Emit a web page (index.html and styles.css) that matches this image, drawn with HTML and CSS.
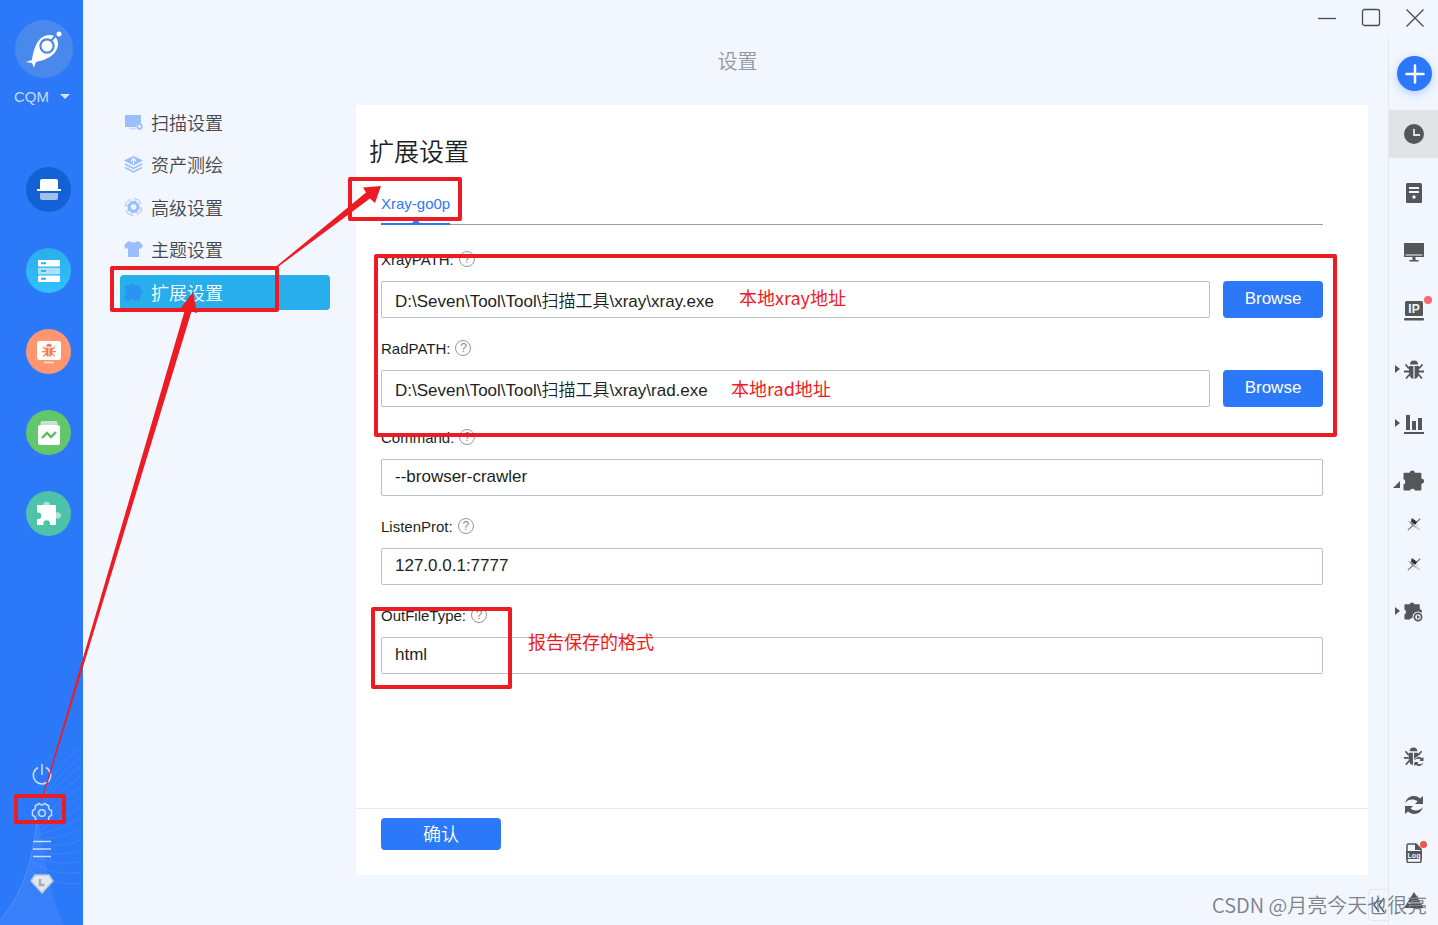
FILE: index.html
```html
<!DOCTYPE html>
<html lang="zh-CN">
<head>
<meta charset="utf-8">
<meta name="viewport" content="width=device-width, initial-scale=1">
<title>设置</title>
<link rel="stylesheet" href="styles.css">
</head>
<body>
<svg class="defs" aria-hidden="true">
  <symbol id="puzzle" viewBox="0 0 20 20"><path d="M1.500 2.500H6.300a2.700 2.700 0 0 1 5.200 0H16.500a1 1 0 0 1 1 1V8a2.500 2.500 0 0 1 0 5v5.500a1 1 0 0 1-1 1H11.300a2.300 1.700 0 0 0-4.600 0H1.500a1 1 0 0 1-1-1V13.500a1.700 2.400 0 0 0 0-4.800V3.500a1 1 0 0 1 1-1z"/></symbol>
  <symbol id="bug" viewBox="0 0 20 20"><path d="M6 4.500a4 4 0 0 1 8 0z"/><path d="M5 6h4.400v13C6.500 18.500 5 16 5 12zM10.600 6H15v6c0 4-1.500 6.500-4.400 7z"/><path d="M5 8.500L1.500 4.500M0 11.500H5M5.500 14.500L2 18.500M15 8.500L18.500 4.500M20 11.500H15M14.500 14.500L18 18.500" fill="none" stroke="currentColor" stroke-width="1.800"/></symbol>
  <symbol id="sync" viewBox="0 0 20 20"><path d="M1 8C3 1 11-1 16 3.500l3-2.500V9H11l2.500-2.500C10 3.500 4 4 1 8zM19 12c-2 7-10 9-15 4.500L1 19V11H9l-2.500 2.500C10 16.500 16 16 19 12z"/></symbol>
  <symbol id="pin" viewBox="0 0 16 16"><path d="M1 15L15 2" stroke="#777" stroke-width="1.500"/><path d="M5.500 1l6 4.500-2 4-5-4z" fill="#333"/><path d="M1 4l9 5 5 6-9-5z" fill="#888"/><path d="M7 8.500l6 6-.5-6z" fill="#ddd"/></symbol>
</svg>

<div class="app">
  <aside class="sidebar">
    <svg class="waves" viewBox="0 0 83 185" fill="none" aria-hidden="true">
      <path d="M0 180C22 156 35 118 37 72C44 118 51 158 64 185H0z" fill="#fff" fill-opacity=".06" stroke="none"/>
      <path d="M0 180C22 156 35 118 37 72" stroke-opacity=".15"/>
      <path d="M37 72C48 38 64 18 83 8M37 74C50 44 65 27 83 16M37 77C51 50 67 36 83 25M37 80C52 58 68 45 83 35M37 83C53 66 69 55 83 45M37 87C54 74 70 64 83 55M37 91C55 82 71 74 83 66M37 95C56 90 71 84 83 77M37 99C56 99 71 94 83 88M36 104C55 107 71 104 83 99M35 109C54 116 70 114 83 110M34 115C52 125 69 124 83 121M32 122C51 134 67 134 83 132M29 130C48 143 66 145 83 143"/>
    </svg>
    <button class="avatar" aria-label="头像">
      <svg width="38" height="38" viewBox="0 0 38 38"><path fill="#fff" d="M7 30C9 17 13 6 24 5c6-.5 9 4 9 9-.500 11-12 16-22 18l-2 5.500-2-4.500-6-1z"/><circle cx="22" cy="16" r="6.600" fill="none" stroke="#4a89ec" stroke-width="2.200"/><path d="M26 11l6-7" stroke="#4a89ec" stroke-width="2"/><circle cx="34" cy="4" r="2.500" fill="#fff"/></svg>
    </button>
    <button class="account">CQM <span class="caret"></span></button>
    <nav class="modules">
      <button class="module navy" aria-label="扫描"><svg width="26" height="24" viewBox="0 0 26 24"><path fill="#fff" d="M4 3a2 2 0 0 1 2-2h14a2 2 0 0 1 2 2v8h3v2H1v-2h3z"/><path fill="#fff" fill-opacity=".6" d="M4 15h18v5a2 2 0 0 1-2 2H6a2 2 0 0 1-2-2z"/></svg></button>
      <button class="module cyan" aria-label="资产"><svg width="22" height="22" viewBox="0 0 22 22"><g fill="#fff"><rect width="22" height="6.500" rx="1"/><rect y="7.700" width="22" height="6.500" rx="1" opacity=".6"/><rect y="15.400" width="22" height="6.500" rx="1"/></g><path d="M3 3.200h5M3 11h5M3 18.700h5" stroke="#2cb4ee" stroke-width="2"/></svg></button>
      <button class="module orange" aria-label="漏洞"><svg width="24" height="24" viewBox="0 0 24 24"><rect y="1" width="24" height="19" rx="2.500" fill="#fff"/><path d="M7 22.500h10" stroke="#fff" stroke-opacity=".7" stroke-width="1.500"/><use href="#bug" x="5" y="3" width="14" height="15"/></svg></button>
      <button class="module green" aria-label="报告"><svg width="22" height="24" viewBox="0 0 22 24"><rect x="2.500" width="17" height="8" rx="2" fill="#fff" opacity=".6"/><rect y="4" width="22" height="20" rx="2.500" fill="#fff"/><path d="M4 17l5-5 4 4 5-5" fill="none" stroke="#55bd62" stroke-width="2.400"/></svg></button>
      <button class="module teal" aria-label="扩展"><svg width="25" height="25" viewBox="0 0 25 25" fill="#fff"><circle cx="10.500" cy="4" r="3.300" opacity=".55"/><circle cx="21.500" cy="14.500" r="3.300" opacity=".55"/><path d="M2 4h17a1 1 0 0 1 1 1v18a1 1 0 0 1-1 1h-5v-1.500a3.300 3.300 0 0 0-6.600 0V24H2a1 1 0 0 1-1-1v-5h1a3.300 3.300 0 0 0 0-6.600H1V5a1 1 0 0 1 1-1z"/></svg></button>
    </nav>
    <div class="tools">
      <button aria-label="退出"><svg width="22" height="22" viewBox="0 0 22 22"><path d="M7 3.500a8.700 8.700 0 1 0 8 0M11 0v11"/></svg></button>
      <button aria-label="设置"><svg width="22" height="22" viewBox="0 0 22 22" stroke-linejoin="round"><circle cx="11" cy="11" r="3.300"/><path d="M20.500 8.500v5Q16.600 14.300 17.900 18L13.600 20.500Q11 17.500 8.400 20.500L4.100 18Q5.400 14.300 1.500 13.500v-5Q5.400 7.700 4.100 4L8.400 1.500Q11 4.500 13.600 1.500L17.900 4Q16.600 7.700 20.500 8.500z"/></svg></button>
      <button aria-label="菜单"><svg width="20" height="18" viewBox="0 0 20 18"><path d="M1 1.500h18M1 9h18M1 16.500h18"/></svg></button>
      <button aria-label="授权"><svg width="24" height="20" viewBox="0 0 24 20"><path d="M5 1h14l4 6-11 12L1 7z" fill="#e3e8ee" stroke="#b4c5da"/><path d="M10 5v6h4.500" stroke="#9aafb9" stroke-width="2.500"/></svg></button>
    </div>
  </aside>

  <div class="workspace">
    <header class="titlebar">
      <button aria-label="最小化"><svg width="20" height="20" viewBox="0 0 20 20"><path d="M1 10.500h18"/></svg></button>
      <button aria-label="最大化"><svg width="20" height="20" viewBox="0 0 20 20"><rect x="1.500" y="1.500" width="17" height="16" rx="2"/></svg></button>
      <button aria-label="关闭"><svg width="20" height="20" viewBox="0 0 20 20"><path d="M1.500 1.500l17 17M18.500 1.500l-17 17"/></svg></button>
    </header>
    <div class="body">
      <main class="main">
        <h1 class="title">设置</h1>
        <div class="content">
          <nav class="menu">
            <a href="#scan"><svg width="19" height="18" viewBox="0 0 19 18"><path d="M1 2h16v8.500a4 4 0 0 0-5 3.500H1z"/><path d="M5 15.500h7" stroke="#c6d9fc" stroke-width="1.500"/><circle cx="15.500" cy="13.500" r="2.300" fill="none" stroke="#9abffb" stroke-width="1.700"/></svg>扫描设置</a>
            <a href="#asset"><svg width="19" height="18" viewBox="0 0 19 18"><path d="M9.500 1L19 5.500 9.500 10.500 0 5.500z"/><path d="M1 9l8.500 4.500L18 9M1 12.500L9.500 17l8.500-4.500" fill="none" stroke="#9abffb" stroke-width="1.500"/><path d="M9.500 9V4M7 6l2.500-2.500L12 6" fill="none" stroke="#f1f6ff" stroke-width="1.300"/></svg>资产测绘</a>
            <a href="#advanced"><svg width="19" height="18" viewBox="0 0 19 18"><circle cx="9.500" cy="9" r="8.300" fill="none" stroke="#9abffb" stroke-dasharray="9.500 3.540"/><circle cx="9.500" cy="9" r="4.300" fill="none" stroke="#9abffb" stroke-width="3"/><circle cx="9.500" cy="9" r="5.900" fill="none" stroke="#9abffb" stroke-width="1.200" stroke-dasharray="2.600 2"/></svg>高级设置</a>
            <a href="#theme"><svg width="19" height="18" viewBox="0 0 19 18"><path d="M6 1c1 2 6 2 7 0l3 1 3 4-2 3-2-1v9H4V8L2 9 0 6l3-4z"/></svg>主题设置</a>
            <a href="#extension" class="active"><svg width="19" height="18"><use href="#puzzle"/></svg>扩展设置</a>
          </nav>
          <form class="panel">
            <div class="panel-body">
              <h2>扩展设置</h2>
              <div class="tabs"><button type="button" class="tab">Xray-go0p</button></div>
              <div class="field">
                <div class="label"><label for="xray">XrayPATH:</label><span class="help">?</span></div>
                <div class="row"><input id="xray" type="text" value="D:\Seven\Tool\Tool\扫描工具\xray\xray.exe"><button type="button" class="primary browse">Browse</button></div>
              </div>
              <div class="field">
                <div class="label"><label for="rad">RadPATH:</label><span class="help">?</span></div>
                <div class="row"><input id="rad" type="text" value="D:\Seven\Tool\Tool\扫描工具\xray\rad.exe"><button type="button" class="primary browse">Browse</button></div>
              </div>
              <div class="field">
                <div class="label"><label for="command">Command:</label><span class="help">?</span></div>
                <div class="row"><input id="command" type="text" value="--browser-crawler"></div>
              </div>
              <div class="field">
                <div class="label"><label for="listen">ListenProt:</label><span class="help">?</span></div>
                <div class="row"><input id="listen" type="text" value="127.0.0.1:7777"></div>
              </div>
              <div class="field">
                <div class="label"><label for="out">OutFileType:</label><span class="help">?</span></div>
                <div class="row"><input id="out" type="text" value="html"></div>
              </div>
            </div>
            <footer class="panel-foot"><button type="button" class="primary confirm">确认</button></footer>
          </form>
        </div>
      </main>

      <aside class="rail">
        <button class="collapse" aria-label="收起"><svg width="12" height="16" viewBox="0 0 12 16"><path d="M6 1L1 8l5 7M11 1L6 8l5 7"/></svg></button>
        <button class="add" aria-label="新建"><svg width="20" height="20" viewBox="0 0 20 20"><path d="M10 1.500v17M1.500 10h17"/></svg></button>
        <div class="group wide">
          <button class="item current" aria-label="任务"><svg width="20" height="20" viewBox="0 0 20 20"><circle cx="10" cy="10" r="10"/><path d="M10 5v6h6" fill="none" stroke="#e1e3e6" stroke-width="1.800"/></svg></button>
          <button class="item" aria-label="资产"><svg width="20" height="20" viewBox="0 0 20 20"><rect x="2" width="16" height="20" rx="1.500"/><path d="M5 5h10M5 9h10" stroke="#f1f6ff" stroke-width="2"/><circle cx="10" cy="14" r="1.700" fill="#f1f6ff"/></svg></button>
          <button class="item" aria-label="主机"><svg width="20" height="20" viewBox="0 0 20 20"><path d="M0 1h20v14H0zM8.500 15h3v3h3v1.500h-9V18h3z"/><path d="M1.500 13h17" stroke="#f1f6ff"/></svg></button>
          <button class="item" aria-label="IP"><svg width="20" height="20" viewBox="0 0 20 20"><rect x="1" width="18" height="15" rx="1.500"/><rect y="17" width="20" height="2.500" rx="1"/><text x="10" y="11.500">IP</text></svg><i class="dot"></i></button>
          <button class="item" aria-label="漏洞"><i class="twist"></i><svg width="20" height="20"><use href="#bug"/></svg></button>
        </div>
        <div class="group">
          <button class="item" aria-label="统计"><i class="twist"></i><svg width="20" height="20" viewBox="0 0 20 20"><path d="M2 1h4v15H2zM8 7h4v9H8zM14 4h4v12h-4zM0 18h20v2H0z"/></svg></button>
          <button class="item" aria-label="扩展"><i class="twist open"></i><svg width="21" height="21"><use href="#puzzle"/></svg></button>
        </div>
        <button class="item small" aria-label="插件一"><svg width="14" height="14"><use href="#pin"/></svg></button>
        <button class="item small" aria-label="插件二"><svg width="14" height="14"><use href="#pin"/></svg></button>
        <button class="item runner" aria-label="运行扩展"><i class="twist"></i><svg width="20" height="20" viewBox="0 0 20 20"><use href="#puzzle" width="18" height="18"/><circle cx="14" cy="15" r="5.500" fill="#f1f6ff"/><circle cx="14" cy="15" r="3.600" fill="none" stroke="currentColor" stroke-width="1.700"/><path d="M13 13l3 2-3 2z"/></svg></button>
        <div class="bottom">
          <button class="item" aria-label="重新扫描"><svg width="20" height="20" viewBox="0 0 20 20"><use href="#bug" width="19" height="19"/><circle cx="15.500" cy="14.500" r="5.500" fill="#f1f6ff"/><use href="#sync" x="10" y="9" width="10" height="11"/></svg></button>
          <button class="item" aria-label="刷新"><svg width="20" height="20"><use href="#sync"/></svg></button>
          <button class="item" aria-label="日志"><svg width="20" height="20" viewBox="0 0 20 20"><path d="M4 1h8l5 5v12a1.500 1.500 0 0 1-1.500 1.500h-11A1.500 1.500 0 0 1 3 18V2z" fill="none" stroke="currentColor" stroke-width="1.500"/><path d="M11 0l7 7h-7zM2 8h16v8H2z"/><text class="log" x="10" y="14.500">Log</text></svg><i class="dot log-dot"></i></button>
          <button class="item" aria-label="告警"><svg width="20" height="20" viewBox="0 0 20 20"><path d="M10 1L20 17H0z"/><path d="M4 12h12" stroke="#f1f6ff"/></svg></button>
        </div>
      </aside>
    </div>
  </div>

  <div class="notes">
    <svg width="1438" height="925" viewBox="0 0 1438 925" aria-hidden="true">
      <g fill="none" stroke="#ed1c24" stroke-width="4" stroke-linejoin="round">
        <rect x="350" y="179" width="110" height="40"/>
        <rect x="112" y="268" width="165" height="42"/>
        <rect x="16" y="796" width="48" height="26"/>
        <rect x="376" y="256" width="959" height="179"/>
        <rect x="373" y="609" width="137" height="78"/>
      </g>
      <g fill="#ed1c24">
        <path d="M40.500 803L185 309.500 180 309 193 292 197 313 191.500 311.500 41.500 803z"/>
        <path d="M275.500 267L366 192.500 363 187.500 381 186 375 203 370 198.500 276.500 268z"/>
      </g>
    </svg>
    <span class="note note-xray">本地xray地址</span>
    <span class="note note-rad">本地rad地址</span>
    <span class="note note-out">报告保存的格式</span>
    <span class="watermark">CSDN @月亮今天也很亮</span>
  </div>
</div>
</body>
</html>
```
FILE: styles.css
```css
* { box-sizing: border-box; }
body {
  margin: 0;
  font-family: "Liberation Sans", "Noto Sans CJK SC", sans-serif;
  font-size: 15px;
  color: #1c1f24;
  background: #f1f6ff;
}
button {
  border: 0;
  padding: 0;
  background: none;
  font: inherit;
  color: inherit;
}
svg { display: block; }
.defs { position: absolute; width: 0; height: 0; }

.app { position: relative; display: flex; min-height: 100vh; overflow: hidden; }

/* Left module bar */
.sidebar {
  position: relative;
  width: 83px;
  flex: none;
  display: flex;
  flex-direction: column;
  padding: 20px 0 31px;
  background: #2b79f9;
}
.waves { position: absolute; left: 0; bottom: 0; width: 83px; height: 185px; stroke: #fff; stroke-opacity: .08; }
.avatar {
  display: grid;
  place-items: center;
  width: 58px;
  height: 58px;
  margin-left: 15px;
  border-radius: 50%;
  background: #4a89ec;
}
.account {
  display: flex;
  align-items: center;
  gap: 11px;
  height: 20px;
  margin: 8px 0 61px 14px;
  color: #c6dbff;
}
.caret { border: 5px solid transparent; border-top-color: #d6e5ff; border-bottom: 0; }
.modules { display: flex; flex-direction: column; gap: 36px; margin-left: 26px; }
.module { display: grid; place-items: center; width: 45px; height: 45px; border-radius: 50%; }
.navy { background: #1261d5; }
.cyan { background: linear-gradient(#2aaee8, #30c1ff); }
.orange { background: #ff966f; color: #ee7f52; fill: currentColor; }
.green { background: #64c66b; }
.teal { background: #4fc2aa; }
.tools {
  position: relative;
  display: flex;
  flex-direction: column;
  align-items: center;
  gap: 16px;
  margin-top: auto;
}
.tools svg { fill: none; stroke: #c8dcff; stroke-width: 1.5; }

/* Window frame */
.workspace { flex: 1; min-width: 0; display: flex; flex-direction: column; }
.titlebar { display: flex; justify-content: flex-end; height: 38px; padding-right: 1px; }
.titlebar button { display: grid; place-items: center; width: 44px; height: 36px; }
.titlebar svg { fill: none; stroke: #4a4c50; stroke-width: 1.3; }
.body { flex: 1; display: flex; }
.main { flex: 1; min-width: 0; display: flex; flex-direction: column; }
.title {
  margin: 8px 0 27px;
  padding-left: 4px;
  font-size: 20px;
  line-height: 32px;
  font-weight: 350;
  text-align: center;
  color: #94979d;
}
.content { flex: 1; display: flex; gap: 26px; padding: 0 20px 50px 37px; }

/* Settings menu */
.menu { width: 210px; height: 205px; display: flex; flex-direction: column; justify-content: space-between; }
.menu a {
  display: flex;
  align-items: center;
  gap: 8px;
  height: 35px;
  padding: 0 4px 2px;
  border-radius: 4px;
  font-size: 18px;
  font-weight: 350;
  color: #45484d;
  text-decoration: none;
}
.menu svg { fill: #9abffb; }
.menu .active { background: #27aeeb; color: #fff; }
.menu .active svg { fill: #2b94f3; }

/* Settings form */
.panel { flex: 1; min-width: 0; display: flex; flex-direction: column; background: #fff; }
.panel-body { flex: 1; padding: 28px 45px 20px 25px; }
.panel h2 { margin: 0 0 0 -12px; font-size: 25px; line-height: 38px; font-weight: 350; }
.tabs { height: 54px; margin-bottom: 24px; border-bottom: 1px solid #999da4; }
.tab { position: relative; height: 54px; padding-top: 12px; color: #2b79f9; border-bottom: 2px solid #2b79f9; }
.tab::after {
  content: "";
  position: absolute;
  left: 50%;
  bottom: 0;
  margin-left: -4px;
  border: 4px solid transparent;
  border-bottom-color: #2b79f9;
  border-top: 0;
}
.field { margin-bottom: 20px; }
.label { display: flex; align-items: center; gap: 5px; height: 20px; margin-bottom: 12px; }
.help {
  display: grid;
  place-items: center;
  width: 16px;
  height: 16px;
  border: 1px solid #94979c;
  border-radius: 50%;
  font-size: 12px;
  line-height: 14px;
  color: #888b91;
}
.row { display: flex; gap: 13px; }
.row input {
  flex: 1;
  min-width: 0;
  height: 37px;
  padding: 0 13px 1px;
  border: 1px solid #bcc0ca;
  border-radius: 2px;
  background: #fff;
  color: #1c1f24;
  font: 350 17px "Liberation Sans", "Noto Sans CJK SC", sans-serif;
}
.primary { border-radius: 4px; background: #2b79f9; color: #fff; }
.browse { width: 100px; height: 37px; padding-bottom: 2px; font-size: 17px; }
.confirm { width: 120px; height: 32px; padding-bottom: 3px; font-size: 18px; font-weight: 350; }
.panel-foot { padding: 9px 25px 25px; border-top: 1px solid #e8e9eb; }

/* Right tool rail */
.rail {
  position: relative;
  display: flex;
  flex-direction: column;
  width: 50px;
  border-left: 1px solid #e4e8f0;
  color: #54565a;
}
.rail svg { fill: currentColor; }
.rail text { font-size: 12px; font-weight: bold; fill: #f1f6ff; text-anchor: middle; }
.rail .log { font-size: 7px; }
.rail .add {
  display: grid;
  place-items: center;
  width: 35px;
  height: 35px;
  margin: 18px 0 19px 8px;
  border-radius: 50%;
  background: #2b79f9;
  box-shadow: 0 3px 8px rgba(43, 121, 249, .3);
}
.add svg { stroke: #fff; stroke-width: 2.5; stroke-linecap: round; }
.group { display: flex; flex-direction: column; gap: 8px; margin-top: 6px; }
.group.wide { gap: 11px; margin-top: 0; }
.item { position: relative; display: grid; place-items: center; width: 100%; height: 48px; }
.item.current { background: #e1e3e6; }
.item.small { height: 40px; }
.item.runner { margin-top: 4px; }
.dot { position: absolute; right: 6px; top: 9px; width: 8px; height: 8px; border-radius: 50%; background: #f9696b; }
.log-dot { right: 11px; top: 12px; width: 7px; height: 7px; background: #f4514a; }
.twist { position: absolute; left: 6px; top: 19px; border: 4px solid transparent; border-left: 5px solid #54565a; border-right: 0; }
.twist.open { left: 4px; top: 25px; border: 0 solid transparent; border-left-width: 7px; border-bottom: 7px solid #54565a; }
.bottom { margin-top: auto; }
.collapse {
  position: absolute;
  right: 49px;
  bottom: 4px;
  display: grid;
  place-items: center;
  width: 21px;
  height: 32px;
  border: 1px solid #e4e8f0;
  border-radius: 4px 0 0 4px;
}
.collapse svg { fill: none; stroke: #54565a; stroke-width: 1.3; }

/* Annotations drawn over the window */
.notes { position: absolute; left: 0; top: 0; width: 1438px; height: 925px; pointer-events: none; }
.note {
  position: absolute;
  font-family: "Noto Sans CJK SC", sans-serif;
  font-size: 18px;
  line-height: 26px;
  color: #ed1c24;
}
.note-xray { left: 739px; top: 284px; }
.note-rad { left: 731px; top: 375px; }
.note-out { left: 528px; top: 628px; }
.watermark {
  position: absolute;
  left: 1212px;
  top: 891px;
  font-family: "Noto Sans CJK SC", sans-serif;
  font-size: 20px;
  line-height: 28px;
  font-weight: 350;
  white-space: nowrap;
  color: #808287;
}
```
